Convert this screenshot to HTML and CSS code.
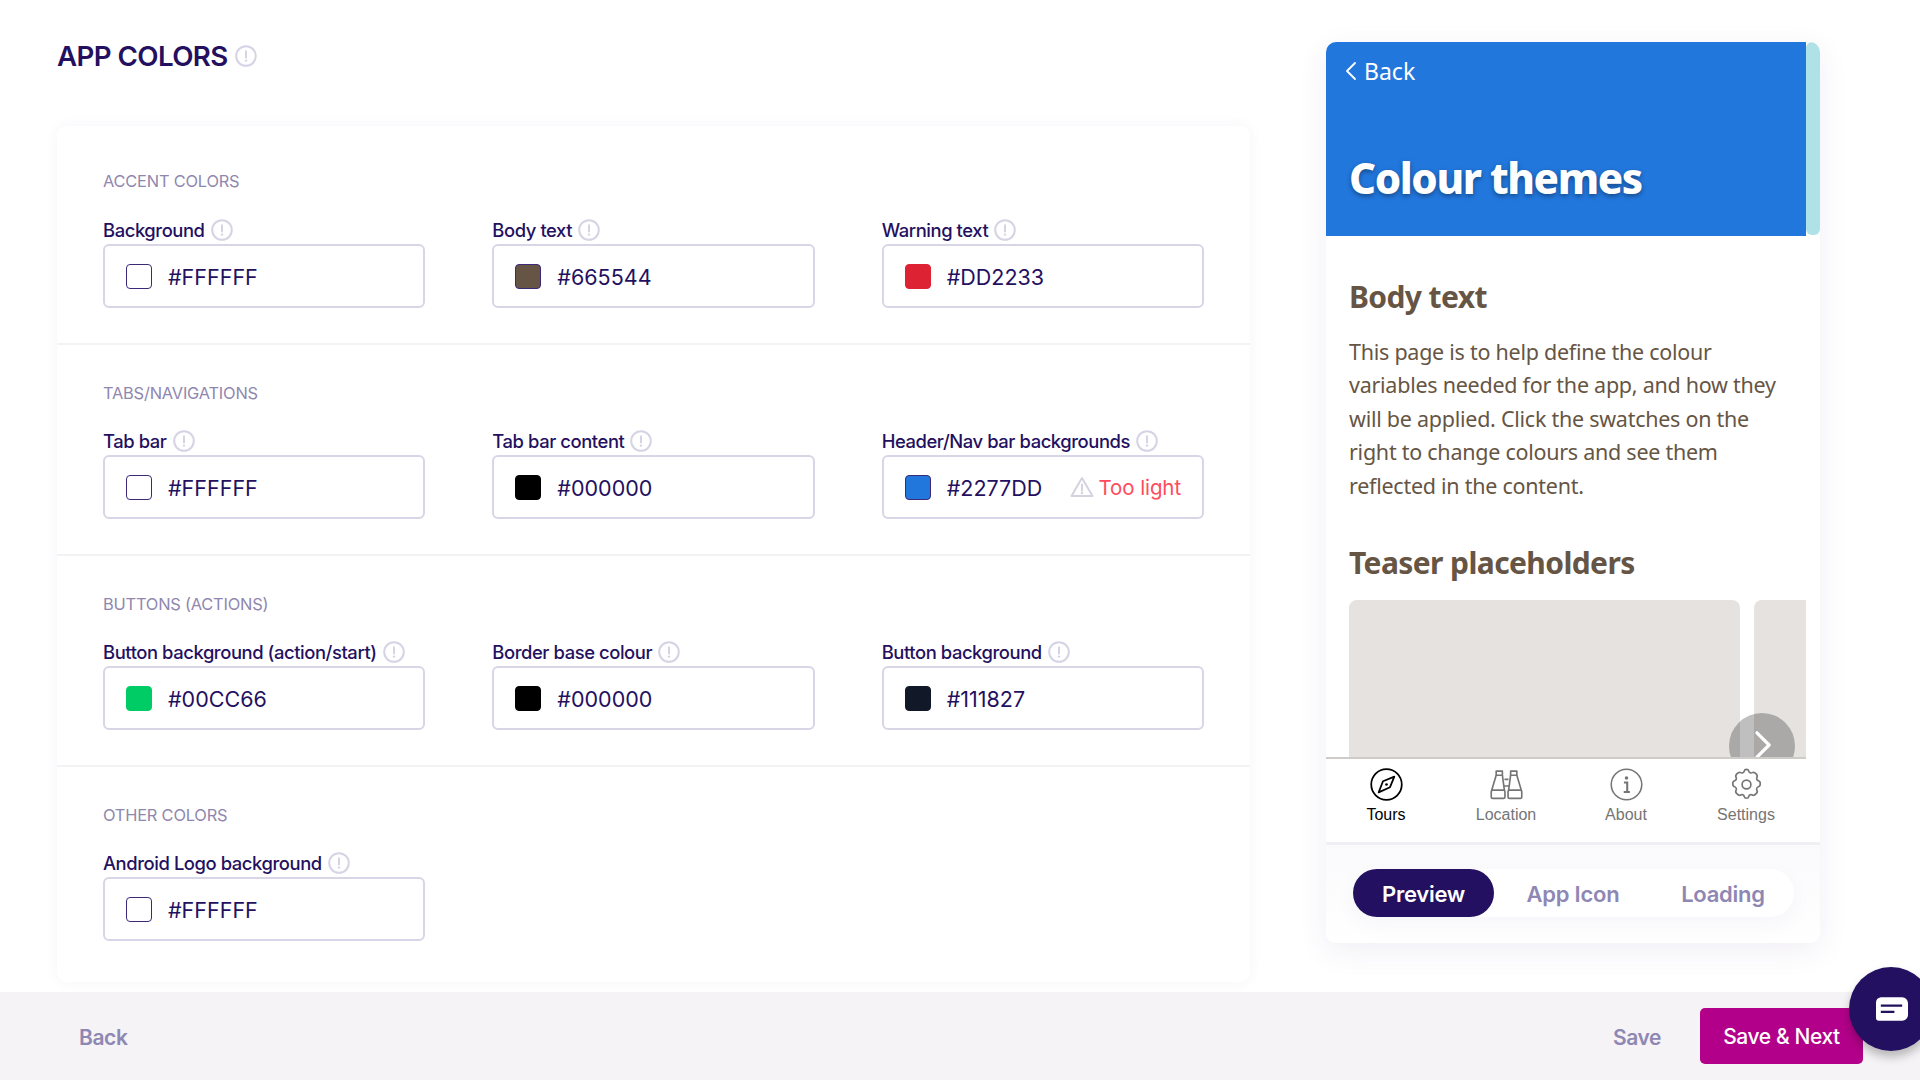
FILE: index.html
```html
<!DOCTYPE html>
<html lang="en">
<head>
<meta charset="utf-8">
<title>App Colors</title>
<link rel="stylesheet" href="styles.css">
</head>
<body>
<svg class="defs" width="0" height="0" aria-hidden="true">
  <symbol id="hint" viewBox="0 0 22 22">
    <circle cx="11" cy="11" r="9.8" fill="none" stroke="#d6d3e4" stroke-width="2"/>
    <path d="M11 6.200v6.200" stroke="#d6d3e4" stroke-width="2" stroke-linecap="round"/>
    <circle cx="11" cy="15.600" r="1.200" fill="#d6d3e4"/>
  </symbol>
</svg>
<div class="app">
  <main class="main">
    <section class="editor">
      <h1 class="page-title">APP COLORS <svg class="hint hint-lg"><use href="#hint"/></svg></h1>
      <div class="card">
        <div class="group group-first">
          <h2 class="group-title">ACCENT COLORS</h2>
          <div class="fields">
            <div class="field"><label class="field-label">Background <svg class="hint"><use href="#hint"/></svg></label><div class="input"><span class="swatch sw-white"></span><span class="hex">#FFFFFF</span></div></div>
            <div class="field"><label class="field-label">Body text <svg class="hint"><use href="#hint"/></svg></label><div class="input"><span class="swatch sw-brown"></span><span class="hex">#665544</span></div></div>
            <div class="field"><label class="field-label">Warning text <svg class="hint"><use href="#hint"/></svg></label><div class="input"><span class="swatch sw-red"></span><span class="hex">#DD2233</span></div></div>
          </div>
        </div>
        <div class="group">
          <h2 class="group-title">TABS/NAVIGATIONS</h2>
          <div class="fields">
            <div class="field"><label class="field-label">Tab bar <svg class="hint"><use href="#hint"/></svg></label><div class="input"><span class="swatch sw-white"></span><span class="hex">#FFFFFF</span></div></div>
            <div class="field"><label class="field-label">Tab bar content <svg class="hint"><use href="#hint"/></svg></label><div class="input"><span class="swatch sw-black"></span><span class="hex">#000000</span></div></div>
            <div class="field"><label class="field-label">Header/Nav bar backgrounds <svg class="hint"><use href="#hint"/></svg></label><div class="input"><span class="swatch sw-blue"></span><span class="hex">#2277DD</span>
              <span class="warn"><svg class="warn-icon" viewBox="0 0 24 22"><path d="M12 2 L22.500 20 H1.500 Z" fill="none" stroke="#d5d2e0" stroke-width="2" stroke-linejoin="round"/><path d="M12 8.500v6" stroke="#d5d2e0" stroke-width="2" stroke-linecap="round"/><circle cx="12" cy="17" r="1.200" fill="#d5d2e0"/></svg>Too light</span></div></div>
          </div>
        </div>
        <div class="group">
          <h2 class="group-title">BUTTONS (ACTIONS)</h2>
          <div class="fields">
            <div class="field"><label class="field-label">Button background (action/start) <svg class="hint"><use href="#hint"/></svg></label><div class="input"><span class="swatch sw-green"></span><span class="hex">#00CC66</span></div></div>
            <div class="field"><label class="field-label">Border base colour <svg class="hint"><use href="#hint"/></svg></label><div class="input"><span class="swatch sw-black"></span><span class="hex">#000000</span></div></div>
            <div class="field"><label class="field-label">Button background <svg class="hint"><use href="#hint"/></svg></label><div class="input"><span class="swatch sw-navy"></span><span class="hex">#111827</span></div></div>
          </div>
        </div>
        <div class="group group-last">
          <h2 class="group-title">OTHER COLORS</h2>
          <div class="fields">
            <div class="field"><label class="field-label">Android Logo background <svg class="hint"><use href="#hint"/></svg></label><div class="input"><span class="swatch sw-white"></span><span class="hex">#FFFFFF</span></div></div>
          </div>
        </div>
      </div>
    </section>

    <aside class="phone">
      <div class="screen">
        <div class="viewport">
          <header class="hero">
            <div class="hero-back"><svg class="chev" viewBox="0 0 12 20"><path d="M10 2 2 10l8 8" fill="none" stroke="#fff" stroke-width="1.800" stroke-linecap="round" stroke-linejoin="round"/></svg>Back</div>
            <div class="hero-title">Colour themes</div>
          </header>
          <div class="content">
            <h3 class="content-head">Body text</h3>
            <p class="content-text">This page is to help define the colour variables needed for the app, and how they will be applied. Click the swatches on the right to change colours and see them reflected in the content.</p>
            <h3 class="content-head content-head-2">Teaser placeholders</h3>
            <div class="carousel">
              <div class="teaser"></div>
              <div class="teaser"></div>
              <div class="next"><svg class="next-icon" viewBox="0 0 20 32"><path d="M3 3l13 13L3 29" fill="none" stroke="#fff" stroke-width="3.400" stroke-linecap="round" stroke-linejoin="round"/></svg></div>
            </div>
          </div>
          <nav class="tabs">
            <div class="tab tab-on">
              <svg class="tab-icon" viewBox="0 0 32 32" fill="none" stroke="currentColor" stroke-width="1.700"><circle cx="16" cy="16" r="14.800"/><path d="M23.600 8.400 19.400 18.600 8.400 23.600 12.600 12.800Z" stroke-linejoin="round"/><circle cx="16" cy="16" r="1.300" fill="currentColor" stroke="none"/></svg>
              <span>Tours</span></div>
            <div class="tab">
              <svg class="tab-icon" viewBox="0 0 32 32" fill="none" stroke="currentColor" stroke-width="1.600" stroke-linejoin="round"><path d="M6 3h6v4H6zM20 3h6v4h-6z"/><path d="M6 7 1.500 22M12 7l2 15M20 7l-2 15M26 7l4.500 15"/><path d="M14 11h4M13.500 17.500h5"/><rect x="1.200" y="21.500" width="13.300" height="8" rx="1.500"/><rect x="17.500" y="21.500" width="13.300" height="8" rx="1.500"/></svg>
              <span>Location</span></div>
            <div class="tab">
              <svg class="tab-icon" viewBox="0 0 32 32" fill="none" stroke="currentColor" stroke-width="1.500"><circle cx="16" cy="16" r="14.800"/><circle cx="16" cy="9.600" r="1.700" fill="currentColor" stroke="none"/><path d="M13.500 14h3.200v9M13.300 23.200h6" stroke-width="2"/></svg>
              <span>About</span></div>
            <div class="tab">
              <svg class="tab-icon" viewBox="0 0 24 24" fill="none" stroke="currentColor" stroke-width="1.200" stroke-linejoin="round"><path d="M10.325 2.317c.426-1.756 2.924-1.756 3.350 0a1.724 1.724 0 0 0 2.573 1.066c1.543-.94 4.310 1.826 3.370 3.370a1.724 1.724 0 0 0 1.065 2.572c1.756.426 1.756 3.924 0 4.350a1.724 1.724 0 0 0-1.066 2.573c.94 1.543-1.826 4.310-3.370 3.370a1.724 1.724 0 0 0-2.572 1.065c-.426 1.756-2.924 1.756-3.350 0a1.724 1.724 0 0 0-2.573-1.066c-1.543.94-4.310-1.826-3.370-3.370a1.724 1.724 0 0 0-1.065-2.572c-1.756-.426-1.756-3.924 0-4.350a1.724 1.724 0 0 0 1.066-2.573c-.94-1.543 1.826-4.310 3.370-3.370.996.608 2.296.07 2.572-1.065z"/><circle cx="12" cy="12" r="3.200"/></svg>
              <span>Settings</span></div>
          </nav>
        </div>
        <div class="scroll-track"><div class="scroll-thumb"></div></div>
      </div>
      <div class="preview-bar">
        <div class="segments">
          <span class="segment segment-on">Preview</span>
          <span class="segment seg-app">App Icon</span>
          <span class="segment seg-load">Loading</span>
        </div>
      </div>
    </aside>
  </main>
  <footer class="footer">
    <span class="foot-link">Back</span>
    <div class="foot-actions">
      <span class="foot-link foot-save">Save</span>
      <button class="primary" type="button">Save &amp; Next</button>
    </div>
  </footer>
</div>
<div class="chat"><svg class="chat-icon" viewBox="0 0 34 24"><path d="M6 0h22a6 6 0 0 1 6 6v12a6 6 0 0 1-6 6H4a3 3 0 0 1-3-3V6a6 6 0 0 1 5-6Z" fill="#fff"/><path d="M6 8.500h22M6 15h14" stroke="#231060" stroke-width="2.400" fill="none"/></svg></div>
</body>
</html>
```
FILE: styles.css
```css
* { box-sizing: border-box; }
html, body { margin: 0; height: 100%; overflow: hidden; }
body { background: #fff; color: #24105f; font-family: Inter, "Liberation Sans", sans-serif; }
.defs { position: absolute; }
.app { height: 1080px; display: flex; flex-direction: column; }
.main { flex: 1; min-height: 0; display: flex; align-items: flex-start; padding-left: 57px; gap: 76px; }

.editor { width: 1193px; }
.page-title { margin: 0; height: 126px; padding-top: 38px; font-size: 27.7px; line-height: 36px; font-weight: 600; letter-spacing: -0.6px; display: flex; align-items: flex-start; gap: 7px; white-space: nowrap; }
.hint { width: 22px; height: 22px; flex: none; }
.hint-lg { margin-top: 7px; }

.card { height: 856px; background: #fff; border-radius: 10px; box-shadow: 0 0 14px rgba(60, 40, 120, .05); }
.group { height: 211px; padding: 39px 46px 0; border-top: 2px solid #f3f3f6; }
.group-first { height: 217px; padding-top: 46px; border-top: 0; }
.group-last { height: 217px; }
.group-title { margin: 0 0 25px; font-size: 16.4px; line-height: 19px; font-weight: 400; color: #8f87ae; letter-spacing: -0.2px; }
.group-first .group-title { margin-bottom: 26px; }
.fields { display: grid; grid-template-columns: repeat(3, 1fr); column-gap: 67px; }
.field-label { display: flex; align-items: center; gap: 6px; height: 27px; padding-bottom: 2px; font-size: 18.4px; font-weight: 500; letter-spacing: -0.42px; white-space: nowrap; }
.input { height: 64px; border: 2px solid #d8d5e6; border-radius: 6px; display: flex; align-items: center; padding-left: 21px; background: #fff; }
.swatch { width: 26px; height: 25px; border-radius: 4px; border: 1.5px solid #3c2a78; flex: none; }
.sw-white { background: #fff; }
.sw-brown { background: #665544; }
.sw-red { background: #dd2233; border-color: #dd2233; }
.sw-black { background: #000; border-color: #000; }
.sw-blue { background: #2277dd; }
.sw-green { background: #00cc66; border-color: #00cc66; }
.sw-navy { background: #111827; border-color: #111827; }
.hex { margin-left: 16px; padding-top: 2px; font-size: 21.5px; }
.warn { margin-left: auto; margin-right: 21px; display: flex; align-items: center; gap: 5px; font-size: 20.5px; color: #ff4b5c; letter-spacing: -0.1px; }
.warn-icon { width: 24px; height: 22px; }

.phone { width: 494px; height: 901px; margin-top: 42px; background: #fff; border-radius: 10px; box-shadow: 0 8px 30px rgba(60, 40, 120, .08); display: flex; flex-direction: column; overflow: hidden; flex: none; }
.screen { height: 803px; display: flex; border-bottom: 3px solid #f0f0f4; flex: none; }
.viewport { width: 480px; display: flex; flex-direction: column; }
.scroll-track { width: 14px; }
.scroll-thumb { height: 193px; background: #aee2e6; border-radius: 6px; }
.hero { height: 194px; background: #2277dd; color: #fff; padding: 0 23px; font-family: "Noto Sans", sans-serif; }
.hero-back { padding-top: 12px; height: 107px; margin-left: -4px; display: flex; align-items: flex-start; gap: 7px; font-size: 23px; line-height: 34px; }
.chev { width: 12px; height: 20px; margin-top: 7px; }
.hero-title { font-size: 42px; font-weight: 800; line-height: 58px; letter-spacing: -1.4px; text-shadow: 0 2px 5px rgba(0, 0, 0, .4); }
.content { flex: 1; min-height: 0; overflow: hidden; padding: 0 0 0 23px; position: relative; font-family: "Noto Sans", sans-serif; color: #665544; }
.content-head { margin: 40px 0 0; font-size: 30px; line-height: 42px; font-weight: 700; letter-spacing: -0.6px; }
.content-text { margin: 17px 0 0; width: 440px; font-size: 21.5px; line-height: 33.4px; letter-spacing: -0.26px; }
.content-head-2 { margin-top: 40px; }
.carousel { display: flex; gap: 14px; margin-top: 16px; height: 180px; }
.teaser { width: 391px; flex: none; background: #e5e2df; border-radius: 8px 8px 0 0; }
.next { position: absolute; left: 403px; bottom: -22px; width: 66px; height: 66px; border-radius: 50%; background: rgba(0, 0, 0, .25); display: flex; align-items: flex-start; justify-content: center; padding-top: 17px; }
.next-icon { width: 19px; height: 30px; margin-left: 2px; }
.tabs { height: 85px; flex: none; display: grid; grid-template-columns: repeat(4, 120px); border-top: 2px solid #cfccc8; background: #fff; font-family: "Liberation Sans", sans-serif; color: #757575; position: relative; }
.tab { display: flex; flex-direction: column; align-items: center; padding-top: 9px; font-size: 16px; gap: 4px; line-height: 20px; }
.tab-on { color: #000; }
.tab-icon { width: 33px; height: 33px; }

.preview-bar { flex: 1; background: linear-gradient(#fafafc, #fff); padding: 24px 0 0 27px; }
.segments { width: 441px; height: 48px; background: #fff; border-radius: 24px; display: flex; align-items: center; font-size: 22px; font-weight: 600; color: #8f87b3; box-shadow: 0 8px 24px rgba(60, 40, 120, .04); }
.segment { text-align: center; letter-spacing: -0.25px; line-height: 50px; height: 48px; }
.segment-on { width: 141px; background: #231060; color: #fff; border-radius: 24px; }
.seg-app { width: 158px; }
.seg-load { width: 142px; }

.footer { height: 88px; flex: none; background: #f5f3f5; display: flex; align-items: center; justify-content: space-between; padding: 0 57px 0 79px; color: #8f87b3; }
.foot-link { padding-top: 2px; font-size: 21px; font-weight: 600; letter-spacing: -0.4px; }
.foot-actions { display: flex; align-items: center; gap: 39px; }
.primary { width: 163px; height: 56px; padding-top: 2px; border: 0; border-radius: 5px; background: #b3008a; color: #fff; font: 500 21px Inter, "Liberation Sans", sans-serif; letter-spacing: -0.4px; }

.chat { position: absolute; left: 1849px; top: 967px; width: 84px; height: 84px; border-radius: 50%; background: #231060; box-shadow: 0 6px 10px rgba(0, 0, 0, .25); display: flex; align-items: center; padding-left: 26px; }
.chat-icon { width: 33px; height: 24px; }
```
